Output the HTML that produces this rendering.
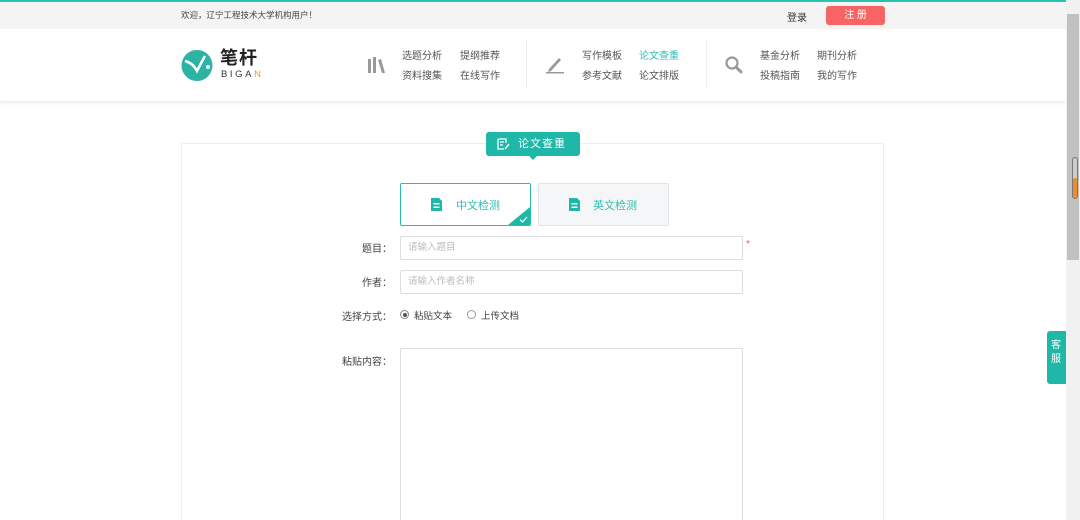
<!DOCTYPE html>
<html style="height:520px;overflow:hidden"><head><meta charset="utf-8"><style>
*{margin:0;padding:0;box-sizing:border-box}
body{width:1080px;height:520px;overflow:hidden;background:#fff;font-family:"Liberation Sans","Noto Sans CJK SC",sans-serif;font-size:10px;color:#333;position:relative}
.a{position:absolute}
.top{left:0;top:0;width:1066px;height:29px;background:#f4f4f4;border-top:2px solid #2cc0b0}
.hdr{left:0;top:29px;width:1066px;height:72px;background:#fff;box-shadow:0 2px 3px rgba(0,0,0,.08)}
.nav{color:#555;font-size:10px;line-height:20px}
.box{left:181px;top:143px;width:703px;height:400px;border:1px solid #eee}
.inp{border:1px solid #ddd;border-radius:2px;height:24px;color:#bbb;padding-left:7px;line-height:22px;font-size:9.5px}
.lbl{font-size:10px;color:#444;text-align:right;width:60px}
</style></head><body>
<div class="a top"></div>
<div class="a" style="left:181px;top:9px;font-size:8.5px;color:#444">欢迎，辽宁工程技术大学机构用户！</div>
<div class="a" style="left:787px;top:9px;font-size:10px;color:#333">登录</div>
<div class="a" style="left:826px;top:6px;width:59px;height:19px;background:#f76464;border-radius:3px;color:#fff;text-align:center;line-height:19px;font-size:10px">注 册</div>
<div class="a hdr"></div>
<svg class="a" style="left:181px;top:49px" width="36" height="33" viewBox="0 0 36 33"><circle cx="16" cy="16.5" r="15.5" fill="#2db3a3"/><path d="M4 12 Q12 14 16 22 Q20 14 24 7" fill="none" stroke="#fff" stroke-width="2.5"/><circle cx="27" cy="18" r="2" fill="#fff"/></svg>
<div class="a" style="left:220px;top:48px;font-size:18px;font-weight:bold;color:#222;letter-spacing:1px;line-height:20px">笔杆</div>
<div class="a" style="left:221px;top:69px;font-size:9.5px;letter-spacing:2.6px;color:#333;line-height:12px">BIGA<span style="color:#f39a1e">N</span></div>
<svg class="a" style="left:367px;top:56px" width="19" height="17"><rect x="1" y="3" width="3" height="14" fill="#999"/><rect x="6" y="1" width="3" height="16" fill="#999"/><path d="M11 4 L14 3 L18 17 L15 17Z" fill="#999"/></svg>
<div class="a nav" style="left:402px;top:47px">选题分析<br>资料搜集</div>
<div class="a nav" style="left:460px;top:47px">提纲推荐<br>在线写作</div>
<div class="a" style="left:526px;top:40px;width:1px;height:48px;background:#eee"></div>
<svg class="a" style="left:545px;top:55px" width="20" height="19"><path d="M4 14 L14 3 L16 5 L6 16 L3 17Z" fill="#999"/><rect x="1" y="17" width="18" height="1.5" fill="#999"/></svg>
<div class="a nav" style="left:582px;top:47px">写作模板<br>参考文献</div>
<div class="a nav" style="left:639px;top:47px"><span style="color:#2cbcb0">论文查重</span><br>论文排版</div>
<div class="a" style="left:706px;top:40px;width:1px;height:48px;background:#eee"></div>
<svg class="a" style="left:724px;top:55px" width="20" height="20"><circle cx="8" cy="8" r="5.5" fill="none" stroke="#999" stroke-width="2.2"/><path d="M12 12 L17 17" stroke="#999" stroke-width="3" stroke-linecap="round"/></svg>
<div class="a nav" style="left:760px;top:47px">基金分析<br>投稿指南</div>
<div class="a nav" style="left:817px;top:47px">期刊分析<br>我的写作</div>
<div class="a box"></div>
<div class="a" style="left:486px;top:132px;width:94px;height:24px;background:#1fb8a8;border-radius:3px;color:#fff;font-size:11px;line-height:24px;padding-left:32px;letter-spacing:1px">论文查重</div>
<svg class="a" style="left:497px;top:138px" width="13" height="12"><path d="M1 1h8v4M1 1v10h6M3 4h4M3 7h3" fill="none" stroke="#fff" stroke-width="1.3"/><path d="M8 11 L12 6" stroke="#fff" stroke-width="1.5"/></svg>
<div class="a" style="left:528px;top:155px;width:0;height:0;border-left:5px solid transparent;border-right:5px solid transparent;border-top:5px solid #1fb8a8"></div>
<div class="a" style="left:400px;top:183px;width:131px;height:43px;border:1px solid #2cbcb0;border-radius:2px;background:#fff;overflow:hidden">
<div class="a" style="right:0;bottom:0;width:0;height:0;border-left:22px solid transparent;border-bottom:18px solid #1fb8a8"></div>
<svg class="a" style="right:2px;bottom:2px" width="9" height="7"><path d="M1 3.5 L3.5 6 L8 1" stroke="#fff" fill="none" stroke-width="1.2"/></svg>
</div>
<div class="a" style="left:538px;top:183px;width:131px;height:43px;border:1px solid #e4e4e4;border-radius:2px;background:#f5f6f7"></div>
<svg class="a" style="left:430px;top:197px" width="13" height="15"><path d="M1 1h8l3 3v10H1z" fill="#1fb8a8"/><rect x="3.5" y="6" width="6" height="1.5" fill="#fff"/><rect x="3.5" y="9.5" width="6" height="1.5" fill="#fff"/></svg>
<div class="a" style="left:456px;top:197px;font-size:11px;color:#2cbcb0">中文检测</div>
<svg class="a" style="left:568px;top:197px" width="13" height="15"><path d="M1 1h8l3 3v10H1z" fill="#1fb8a8"/><rect x="3.5" y="6" width="6" height="1.5" fill="#fff"/><rect x="3.5" y="9.5" width="6" height="1.5" fill="#fff"/></svg>
<div class="a" style="left:593px;top:197px;font-size:11px;color:#2cbcb0">英文检测</div>
<div class="a lbl" style="left:332px;top:240px">题目：</div>
<div class="a inp" style="left:400px;top:236px;width:343px;line-height:21px">请输入题目</div>
<div class="a" style="left:746px;top:239px;color:#e55;font-size:10px">*</div>
<div class="a lbl" style="left:332px;top:274px">作者：</div>
<div class="a inp" style="left:400px;top:270px;width:343px;line-height:21px">请输入作者名称</div>
<div class="a lbl" style="left:332px;top:308px">选择方式：</div>
<div class="a" style="left:400px;top:310px;width:9px;height:9px;border:1px solid #888;border-radius:50%"><div style="margin:1.5px;width:4px;height:4px;border-radius:50%;background:#555"></div></div>
<div class="a" style="left:414px;top:308px;font-size:9.5px;color:#444">粘贴文本</div>
<div class="a" style="left:467px;top:310px;width:9px;height:9px;border:1px solid #999;border-radius:50%"></div>
<div class="a" style="left:481px;top:308px;font-size:9.5px;color:#444">上传文档</div>
<div class="a lbl" style="left:332px;top:353px">粘贴内容：</div>
<div class="a" style="left:400px;top:348px;width:343px;height:180px;border:1px solid #ddd;border-radius:2px"></div>
<div class="a" style="left:1066px;top:0;width:14px;height:520px;background:#f1f1f1"></div>
<div class="a" style="left:1067px;top:14px;width:12px;height:246px;background:#c1c1c1"></div>
<div class="a" style="left:1072px;top:157px;width:6px;height:42px;border:1px solid #777;border-radius:3px;background:#ccc"></div>
<div class="a" style="left:1073px;top:178px;width:4px;height:20px;background:#f08a2c;border-radius:2px"></div>
<div class="a" style="left:1047px;top:331px;width:19px;height:53px;background:#1fb8a8;border-radius:3px 0 0 3px;color:#fff;font-size:10px;line-height:14px;padding:8px 0 0 4px">客<br>服</div>
</body></html>
